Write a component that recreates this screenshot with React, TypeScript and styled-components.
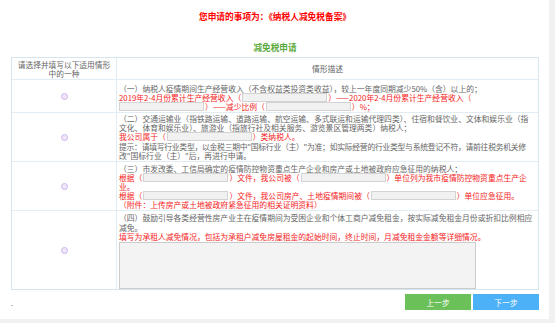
import styled, { createGlobalStyle } from "styled-components"

const Global = createGlobalStyle`
body {
        margin: 0;
        background: #f1f1f1;
        font-family: "Noto Sans CJK SC", "Noto Sans", sans-serif;
}
`

const App = () => {
        return (
                <Page>
                        <Global />
                        <Title>您申请的事项为：《纳税人减免税备案》</Title>
                        <SubTitle>减免税申请</SubTitle>
                        <Table>
                                <Row>
                                        <HeadCell>请选择并填写以下适用情形<br />中的一种</HeadCell>
                                        <HeadDesc>情形描述</HeadDesc>
                                </Row>
                                <Row $h={32}>
                                        <RadioCell><Radio /></RadioCell>
                                        <Desc $pt={3.5}>
                                                <Line>（一）纳税人疫情期间生产经营收入（不含权益类投资类收益），较上一年度同期减少50%（含）以上的；</Line>
                                                <Line $red>2019年2-4月份累计生产经营收入（<Field />）——2020年2-4月份累计生产经营收入（</Line>
                                                <Line $red><Field $first />）——减少比例（<Field />）%；</Line>
                                        </Desc>
                                </Row>
                                <Row $h={48}>
                                        <RadioCell><Radio /></RadioCell>
                                        <Desc $pt={1}>
                                                <Line>（二）交通运输业（指铁路运输、道路运输、航空运输、多式联运和运输代理四类）、住宿和餐饮业、文体和娱乐业（指</Line>
                                                <Line>文化、体育和娱乐业）、旅游业（指旅行社及相关服务、游览景区管理两类）纳税人；</Line>
                                                <Line $red>我公司属于（<Field />）类纳税人。</Line>
                                                <Line $tight>提示：请填写行业类型，以金税三期中"国标行业（主）"为准；如实际经营的行业类型与系统登记不符，请前往税务机关修</Line>
                                                <Line>改"国标行业（主）"后，再进行申请。</Line>
                                        </Desc>
                                </Row>
                                <Row $h={48}>
                                        <RadioCell><Radio /></RadioCell>
                                        <Desc $pt={1.5}>
                                                <Line>（三）市发改委、工信局确定的疫情防控物资重点生产企业和房产或土地被政府应急征用的纳税人；</Line>
                                                <Line $red>根据（<Field />）文件，我公司被（<Field />）单位列为我市疫情防控物资重点生产企</Line>
                                                <Line $red>业。</Line>
                                                <Line $red>根据（<Field />）文件，我公司房产、土地疫情期间被（<Field />）单位应急征用。</Line>
                                                <Line $red>（附件：上传房产或土地被政府紧急征用的相关证明资料）</Line>
                                        </Desc>
                                </Row>
                                <Row $h={78}>
                                        <RadioCell><Radio /></RadioCell>
                                        <Desc $pt={2.4}>
                                                <Line>（四）鼓励引导各类经营性房产业主在疫情期间为受困企业和个体工商户减免租金，按实际减免租金月份或折扣比例相应</Line>
                                                <Line>减免。</Line>
                                                <Line $red>填写为承租人减免情况，包括为承租户减免房屋租金的起始时间，终止时间，月减免租金金额等详细情况。</Line>
                                                <Area />
                                        </Desc>
                                </Row>
                        </Table>
                        <Bar>
                                <Tick />
                                <Buttons>
                                        <Button $bg="#6cc05a">上一步</Button>
                                        <Button $bg="#4cb1f6">下一步</Button>
                                </Buttons>
                        </Bar>
                </Page>
        )
}

export default App

const Page = styled.div`
width: 549px;
height: 319px;
box-sizing: border-box;
background: #fff;
padding: 11px 10px 0 11px;
display: flex;
flex-direction: column;
`
const Title = styled.div`
text-align: center;
color: #f00;
font-size: 8.7px;
font-weight: 700;
line-height: 12px;
`
const SubTitle = styled.div`
margin-top: 18px;
text-align: center;
color: #5aa83a;
font-size: 8.6px;
font-weight: 700;
line-height: 12px;
`
const Table = styled.div`
margin-top: 4px;
border: 1px solid #d6e6f1;
`
const Row = styled.div<{ $h?: number }>`
display: grid;
grid-template-columns: 105px 1fr;
height: ${p => (p.$h ? p.$h + "px" : "21px")};
& + & {
        border-top: 1px solid #e1ecf4;
}
`
const HeadCell = styled.div`
border-right: 1px solid #e1ecf4;
color: #666;
font-size: 7.7px;
line-height: 9px;
text-align: center;
display: flex;
align-items: center;
justify-content: center;
`
const HeadDesc = styled.div`
color: #666;
font-size: 7.8px;
display: flex;
align-items: center;
justify-content: center;
`
const RadioCell = styled.div`
border-right: 1px solid #e1ecf4;
display: flex;
align-items: center;
justify-content: center;
`
const Radio = styled.span`
width: 5px;
height: 5px;
border-radius: 50%;
border: 1px solid #cdb6ec;
background: #efe6fa;
`
const Desc = styled.div<{ $pt: number }>`
padding: ${p => p.$pt}px 0 0 2px;
font-size: 7.8px;
line-height: 9.2px;
overflow: hidden;
`
const Line = styled.div<{ $red?: boolean; $tight?: boolean }>`
white-space: nowrap;
color: ${p => (p.$red ? "#f51b1b" : "#666")};
letter-spacing: ${p => (p.$tight ? "-0.25px" : "0")};
`
const Field = styled.span<{ $first?: boolean }>`
display: inline-block;
width: 83px;
height: 7px;
margin: ${p => (p.$first ? "0 1px 0 0" : "0 1px")};
vertical-align: -1px;
background: #f1f1f1;
border: 1px solid #d3d3d3;
`
const Area = styled.div`
width: 355px;
height: 45px;
margin-top: 1px;
background: #f3f3f3;
border: 1px solid #cccccc;
`
const Bar = styled.div`
margin-top: 4px;
display: flex;
align-items: center;
justify-content: space-between;
`
const Tick = styled.span`
width: 2px;
height: 1px;
margin-top: 6px;
background: #bbb;
`
const Buttons = styled.div`
display: flex;
gap: 2px;
`
const Button = styled.div<{ $bg: string }>`
width: 66px;
height: 16px;
display: flex;
align-items: center;
justify-content: center;
color: #fff;
font-size: 7.8px;
background: ${p => p.$bg};
border: 1px solid ${p => p.$bg};
box-sizing: border-box;
cursor: pointer;
`
